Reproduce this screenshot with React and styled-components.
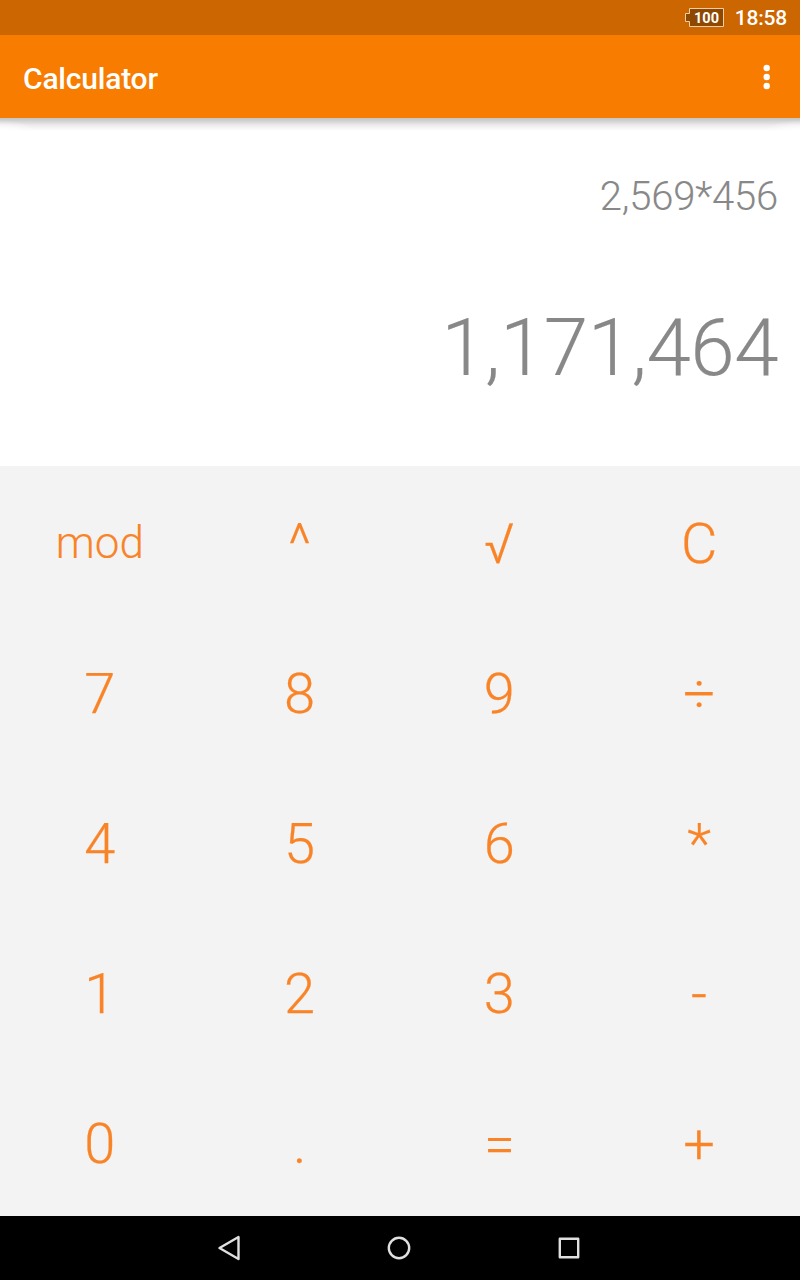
import React from 'react';
import styled, { createGlobalStyle } from 'styled-components';

const Global = createGlobalStyle`
  *{box-sizing:border-box}
  body{margin:0;background:#fff;font-family:Roboto,sans-serif}
`;
const Screen = styled.div`width:800px;height:1280px;display:flex;flex-direction:column;overflow:hidden;`;
const StatusBar = styled.div`height:35px;background:#cc6600;color:#fff;display:flex;align-items:center;justify-content:flex-end;gap:10px;padding:1px 13px 0 0;font-size:21px;font-weight:500;`;
const Battery = styled.svg`width:40px;height:20px;fill:#8f4800;stroke:#f1cda9;`;
const BatteryLevel = styled.text`font-size:15.5px;font-weight:700;fill:#fff;stroke:none;text-anchor:middle;`;
const Clock = styled.span`letter-spacing:-0.2px;`;
const AppBar = styled.header`height:83px;flex:none;background:#f77c00;color:#fff;display:flex;align-items:center;justify-content:space-between;padding:0 28px 0 23px;`;
const Title = styled.h1`margin:3px 0 0;font-size:30px;font-weight:500;letter-spacing:-0.2px;`;
const MenuDots = styled.svg`width:10px;height:26px;fill:#fff;`;
const Shade = styled.div`
  height:13px;flex:none;
  background:
    radial-gradient(ellipse 36px 11px at 0 100%,#fff,rgba(255,255,255,0)),
    radial-gradient(ellipse 36px 11px at 100% 100%,#fff,rgba(255,255,255,0)),
    linear-gradient(#c4c4c4,#d0d0d0 20%,#ececec 55%,#fff);
`;
const Display = styled.section`height:335px;flex:none;color:#888;display:flex;flex-direction:column;align-items:flex-end;padding:40px 22px 0 0;font-weight:300;`;
const Formula = styled.div`font-size:40px;line-height:52px;letter-spacing:-0.2px;-webkit-text-stroke:0.1px;`;
const Result = styled.div`font-size:80px;line-height:100px;margin-top:75px;letter-spacing:-0.5px;-webkit-text-stroke:0.15px;`;
const Keypad = styled.main`height:750px;background:#f3f3f3;display:grid;grid-template-columns:repeat(4,1fr);grid-template-rows:repeat(5,1fr);padding-right:1px;`;
const Key = styled.button`border:0;padding:${p => p.$small ? 3 : 6}px 0 0;background:none;color:#f98428;font-family:inherit;font-weight:300;font-size:${p => p.$small ? 44 : 56}px;line-height:1;-webkit-text-stroke:${p => p.$small ? 0.1 : 0.25}px;`;
const NavBar = styled.nav`height:64px;background:#000;display:flex;justify-content:center;align-items:center;gap:138px;padding-right:2px;`;
const NavIcon = styled.svg`width:32px;height:32px;fill:none;stroke:#e0e0e0;stroke-width:2.4;stroke-linejoin:round;`;
const keys = ['mod','^','√','C','7','8','9','÷','4','5','6','*','1','2','3','-','0','.','=','+'];

export default function App() {
  return <Screen><Global />
    <StatusBar>
      <Battery><path d="M4.5 .5H38.5V18.5H4.5V13.5H.5V5.5H4.5Z"/><BatteryLevel x="21.5" y="15" textLength="25" lengthAdjust="spacingAndGlyphs">100</BatteryLevel></Battery>
      <Clock>18:58</Clock>
    </StatusBar>
    <AppBar><Title>Calculator</Title>
      <MenuDots><circle cx="4.7" cy="4" r="3.2"/><circle cx="4.7" cy="13" r="3.2"/><circle cx="4.7" cy="22" r="3.2"/></MenuDots>
    </AppBar>
    <Shade />
    <Display><Formula>2,569*456</Formula><Result>1,171,464</Result></Display>
    <Keypad>{keys.map(k => <Key key={k} $small={k === 'mod'}>{k}</Key>)}</Keypad>
    <NavBar>
      <NavIcon><path d="M25.5 5V27L6.5 16Z"/></NavIcon>
      <NavIcon><circle cx="16" cy="16" r="10.2"/></NavIcon>
      <NavIcon><path d="M6.8 6.8H25.2V25.2H6.8Z"/></NavIcon>
    </NavBar>
  </Screen>;
}
